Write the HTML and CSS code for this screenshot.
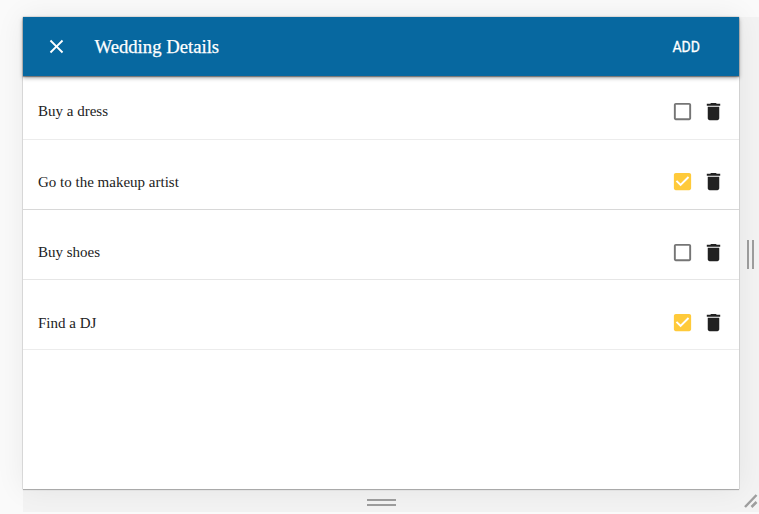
FILE: index.html
```html
<!DOCTYPE html>
<html lang="en">
<head>
<meta charset="utf-8">
<title>Wedding Details</title>
<link rel="stylesheet" href="styles.css">
</head>
<body>
<svg class="defs" width="0" height="0">
  <symbol id="trash" viewBox="0 0 24 24"><path d="M6 19c0 1.1.9 2 2 2h8c1.1 0 2-.9 2-2V7H6v12zM19 4h-3.500l-1-1h-5l-1 1H5v2h14V4z"/></symbol>
  <symbol id="empty" viewBox="0 0 24 24"><path d="M19 5v14H5V5h14m0-2H5c-1.100 0-2 .9-2 2v14c0 1.100.9 2 2 2h14c1.100 0 2-.9 2-2V5c0-1.100-.9-2-2-2z"/></symbol>
  <symbol id="checked" viewBox="0 0 24 24"><path d="M19 3H5c-1.110 0-2 .9-2 2v14c0 1.100.89 2 2 2h14c1.110 0 2-.9 2-2V5c0-1.100-.89-2-2-2zm-9 14l-5-5 1.410-1.410L10 14.170l7.590-7.590L19 8l-9 9z"/></symbol>
</svg>
<div class="frame">
  <main class="dialog">
    <header class="bar">
      <svg class="close" viewBox="0 0 24 24"><path d="M19 6.410L17.590 5 12 10.590 6.410 5 5 6.410 10.590 12 5 17.590 6.410 19 12 13.410 17.590 19 19 17.590 13.410 12z"/></svg>
      <h1>Wedding Details</h1>
      <button class="add">ADD</button>
    </header>
    <ul class="list">
      <li><span>Buy a dress</span><svg class="box"><use href="#empty"/></svg><svg class="trash"><use href="#trash"/></svg></li>
      <li><span>Go to the makeup artist</span><svg class="box on"><use href="#checked"/></svg><svg class="trash"><use href="#trash"/></svg></li>
      <li><span>Buy shoes</span><svg class="box"><use href="#empty"/></svg><svg class="trash"><use href="#trash"/></svg></li>
      <li><span>Find a DJ</span><svg class="box on"><use href="#checked"/></svg><svg class="trash"><use href="#trash"/></svg></li>
    </ul>
  </main>
  <div class="side"><svg width="7" height="29" viewBox="0 0 7 29"><path d="M1 0v29M6 0v29"/></svg></div>
  <div class="bottom"><svg width="29" height="7" viewBox="0 0 29 7"><path d="M0 1h29M0 6h29"/></svg></div>
  <div class="corner"><svg width="14" height="15" viewBox="0 0 14 15"><path d="M1 14L12.500 2M7.500 14L12.500 9"/></svg></div>
</div>
</body>
</html>
```
FILE: styles.css
```css
body { margin: 0; background: #fafafa; overflow: hidden; }
.defs { display: block; }
.frame {
  display: grid;
  grid-template: 472px 23px / 716px 20px;
  margin: 17px 0 0 23px;
}
.dialog {
  z-index: 1;
  background: #fff;
  box-shadow: 0 0 1px rgba(0,0,0,.45), 0 1px 1px rgba(0,0,0,.22), 0 0 28px rgba(0,0,0,.07);
}
.bar {
  display: flex;
  align-items: center;
  box-sizing: border-box;
  height: 59px;
  padding: 0 23px 0 22px;
  color: #fff;
  background: #0768a0;
  box-shadow: 0 1px 1px rgba(0,0,0,.35), 0 2px 4px rgba(0,0,0,.35);
}
.close { width: 23px; height: 23px; fill: #fff; }
h1 {
  flex: 1;
  margin: 1px 0 0 26.500px;
  font: 500 18.700px "Liberation Serif", serif;
  -webkit-text-stroke: .25px #fff;
}
.add {
  border: 0;
  padding: 0 16px;
  background: none;
  color: #fff;
  font: 14px Roboto, sans-serif;
  -webkit-text-stroke: .3px #fff;
}
.list { margin: 1px 0 0; padding: 0; list-style: none; }
li {
  display: flex;
  align-items: center;
  box-sizing: border-box;
  height: 70px;
  padding: 14px 14.500px 0 15px;
  border-bottom: 1px solid #e6e6e6;
  font: 15px "Liberation Serif", serif;
  color: #222;
}
li:nth-child(1) { height: 63px; padding-top: 6px; border-color: #ececec; }
li:nth-child(2) { border-color: #d8d8d8; }
li:nth-child(2) span, li:nth-child(4) span { padding-top: 1px; }
li:nth-child(3) { padding-top: 15px; }
li:nth-child(4) { padding-top: 16px; border-color: #ececec; }
li span { flex: 1; }
.box, .trash { width: 23px; height: 23px; fill: #757575; }
.box { margin-right: 8px; }
.on { fill: #ffca3a; }
.trash { fill: #212121; }
.side, .bottom, .corner { display: flex; align-items: center; justify-content: center; box-sizing: border-box; background: #f3f3f3; }
.side { padding: 2px 0 0 2px; }
.bottom { padding-top: 4px; }
.corner { padding-left: 3px; }
.side path, .bottom path, .corner path { stroke: #9e9e9e; stroke-width: 2; fill: none; }
.corner path { stroke-width: 2.500; }
```
